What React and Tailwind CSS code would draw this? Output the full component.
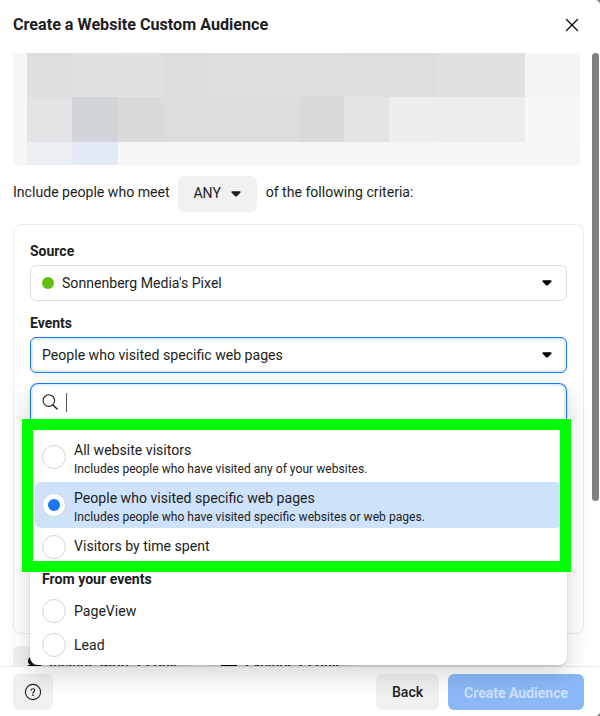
import clsx from "clsx"

const mosaic = [
  {
    height: "h-11",
    edge: "bg-[#f5f5f5]",
    cells: ["bg-[#dedede]", "bg-[#e0e0e0]", "bg-[#e1e1e1]", "bg-[#dddddd]", "bg-[#dfdfdf]", "bg-[#dfdfdf]", "bg-[#dfdfdf]", "bg-[#dedede]", "bg-[#dedede]", "bg-[#e0e0e0]", "bg-[#e0e0e0]"],
  },
  {
    height: "h-[45px]",
    edge: "bg-[#f7f7f7]",
    cells: ["bg-[#e4e4e6]", "bg-[#d1d5da]", "bg-[#dadada]", "bg-[#dcdcdc]", "bg-[#dcdcdc]", "bg-[#dddddd]", "bg-[#dadada]", "bg-[#e3e3e3]", "bg-[#eeeeee]", "bg-[#ededed]", "bg-[#ededed]"],
  },
  {
    height: "h-[23px]",
    edge: "bg-[#f6f6f6]",
    cells: ["bg-[#ebf0f5]", "bg-[#e4eaf5]"],
  },
]

function Caret({ className }) {
  return (
    <svg viewBox="0 0 10 6" className={clsx("h-1.5 w-2.5", className)}>
      <path d="M1.2 0.3h7.6c.8 0 1.1.8.5 1.4L5.9 5.2c-.5.5-1.3.5-1.8 0L.7 1.7C.1 1.1.4.3 1.2.3z" fill="currentColor" />
    </svg>
  )
}

function Radio({ checked }) {
  return (
    <span className="flex size-6 shrink-0 items-center justify-center rounded-full border border-[#d4d5d7] bg-white">
      {checked && <span className="size-3 rounded-full bg-[#1877f2]" />}
    </span>
  )
}

function Option({ label, hint, checked, className }) {
  return (
    <div className={clsx("flex items-center gap-2 rounded-md pl-[7px]", className)}>
      <Radio checked={checked} />
      <div className={clsx(hint && "pt-1")}>
        <p className="leading-[19px]">{label}</p>
        {hint && <p className="text-[12.1px] leading-[18px] text-[#222]">{hint}</p>}
      </div>
    </div>
  )
}

function Mosaic() {
  return (
    <div className="w-[567px] pt-px">
      {mosaic.map((row, i) => (
        <div key={i} className={clsx("flex bg-[#f6f6f6]", row.height)}>
          <div className="w-3.5 bg-[#f7f7f7]" />
          {row.cells.map((color, j) => (
            <div key={j} className={clsx("w-[45.3px]", color)} />
          ))}
          <div className={clsx("flex-1", row.edge)} />
        </div>
      ))}
    </div>
  )
}

function EventsMenu() {
  return (
    <div className="absolute top-[383px] left-[30px] h-[282px] w-[537px] rounded-lg bg-white shadow-[0_1px_2px_rgba(0,0,0,0.2),0_10px_26px_rgba(0,0,0,0.16)]">
      <div className="flex h-10 items-center rounded-t-lg border border-b-0 border-[#1877f2] pb-[3px] pl-[11px] shadow-[inset_0_0_0_2px_#e3edfb]">
        <svg viewBox="0 0 16 16" className="size-4" fill="none" stroke="#222" strokeLinecap="round">
          <circle cx="6.8" cy="6.6" r="5.8" strokeWidth="1.1" />
          <path d="M11 11l4.1 4" strokeWidth="1.5" />
        </svg>
        <span className="ml-2 h-[19px] w-px bg-[#555]" />
      </div>
      <div className="flex flex-col px-[5px] pt-[11px]">
        <Option className="h-[46px]" label="All website visitors" hint="Includes people who have visited any of your websites." />
        <Option className="mt-0.5 h-[46px] bg-[#cfe2fc]" label="People who visited specific web pages" hint="Includes people who have visited specific websites or web pages." checked />
        <Option className="h-[37px]" label="Visitors by time spent" />
        <h3 className="pt-[5px] pl-[7px] text-[14.1px] leading-[18px] font-bold">From your events</h3>
        <Option className="mt-1.5 h-[34px]" label="PageView" />
        <Option className="h-[34px]" label="Lead" />
      </div>
    </div>
  )
}

export default function App() {
  return (
    <div className="w-[600px] bg-[#808080]">
      <div className="relative flex h-[716px] flex-col overflow-hidden rounded-r-[5px] bg-white font-[Roboto,sans-serif] text-[14.1px] text-[#1c1e21]">
        <header className="flex h-[52px] shrink-0 items-center justify-between pr-[21px] pb-[3px] pl-[13px]">
          <h1 className="pt-px text-[16.15px] leading-5 font-bold">Create a Website Custom Audience</h1>
          <svg viewBox="0 0 14 14" className="size-3.5" fill="none" stroke="#111" strokeWidth="1.4" strokeLinecap="round">
            <path d="M1.5 1.5l11 11M12.5 1.5l-11 11" />
          </svg>
        </header>

        <div className="flex h-[614px] shrink-0 overflow-hidden">
          <main className="ml-[13px] w-[571px] shrink-0">
            <Mosaic />

            <div className="mt-[11px] flex items-center">
              <span className="-mt-[3px]">Include people who meet</span>
              <button className="ml-2 flex h-9 w-[79px] items-center justify-center gap-2.5 rounded-md bg-[#f1f1f1]">
                ANY
                <Caret />
              </button>
              <span className="-mt-[3px] ml-[9px]">of the following criteria:</span>
            </div>

            <section className="mt-3 h-[410px] rounded-lg border border-[#ebecef] px-4 pt-[17px]">
              <h2 className="text-sm leading-[18px] font-bold">Source</h2>
              <div className="mt-[5px] flex h-9 items-center rounded-md border border-[#dcdddf] pr-3.5 pl-[11px]">
                <span className="size-3 rounded-full bg-[#5fbf13]" />
                <span className="ml-2 pt-px">Sonnenberg Media's Pixel</span>
                <Caret className="ml-auto text-black" />
              </div>
              <h2 className="mt-[13px] text-sm leading-[18px] font-bold">Events</h2>
              <div className="mt-[5px] flex h-9 items-center rounded-md border border-[#1877f2] pr-3.5 pl-[11px] shadow-[inset_0_0_0_2px_#e3edfb]">
                <span className="pt-0.5">People who visited specific web pages</span>
                <Caret className="ml-auto text-black" />
              </div>
            </section>

            <div className="mt-3 flex gap-4 text-[14.4px]">
              <button className="flex h-9 w-[180px] items-center rounded-md bg-[#f0f0f0] pl-3 font-medium">
                <svg viewBox="0 0 16 16" className="mr-2 size-4" fill="#111">
                  <circle cx="7" cy="5" r="4" />
                  <path d="M0 15c0-9 14-9 14 0zM10 8h6v2h-6z" />
                </svg>
                Include More People
              </button>
              <button className="flex h-9 w-[148px] items-center rounded-md bg-[#f0f0f0] pl-3 font-medium">
                <span className="mt-1 mr-2 h-0.5 w-4 bg-black" />
                Exclude People
              </button>
            </div>
          </main>
          <div className="mt-px ml-2 h-[448px] w-[7px] shrink-0 rounded-full bg-[#808080]" />
        </div>

        <footer className="flex h-[50px] shrink-0 items-start border-t border-[#ececec] bg-white pt-[7px] pr-4 pl-[13px]">
          <button className="flex h-9 w-10 items-center justify-center rounded-md bg-[#f1f1f1]">
            <svg viewBox="0 0 18 18" className="size-[18px]" fill="none" stroke="#1c1e21" strokeWidth="1.1" strokeLinecap="round">
              <circle cx="9" cy="9" r="7.6" />
              <path d="M7.2 7.2C7.2 5.2 10.8 5.2 10.8 7.2 10.8 8.5 9 8.6 9 10.2" />
              <circle cx="9" cy="12.2" r=".3" />
            </svg>
          </button>
          <button className="ml-auto h-9 w-[63px] rounded-md bg-[#f1f1f1] pt-0.5 font-medium">Back</button>
          <button className="ml-[9px] h-9 w-[136px] rounded-md bg-[#8bb9f8] pt-0.5 text-sm font-bold text-[#d0e2fb]">Create Audience</button>
        </footer>

        <EventsMenu />
        <div className="absolute top-[419px] left-[22px] h-[153px] w-[549px] border-[11px] border-[#00ff00]" />
      </div>
    </div>
  )
}
